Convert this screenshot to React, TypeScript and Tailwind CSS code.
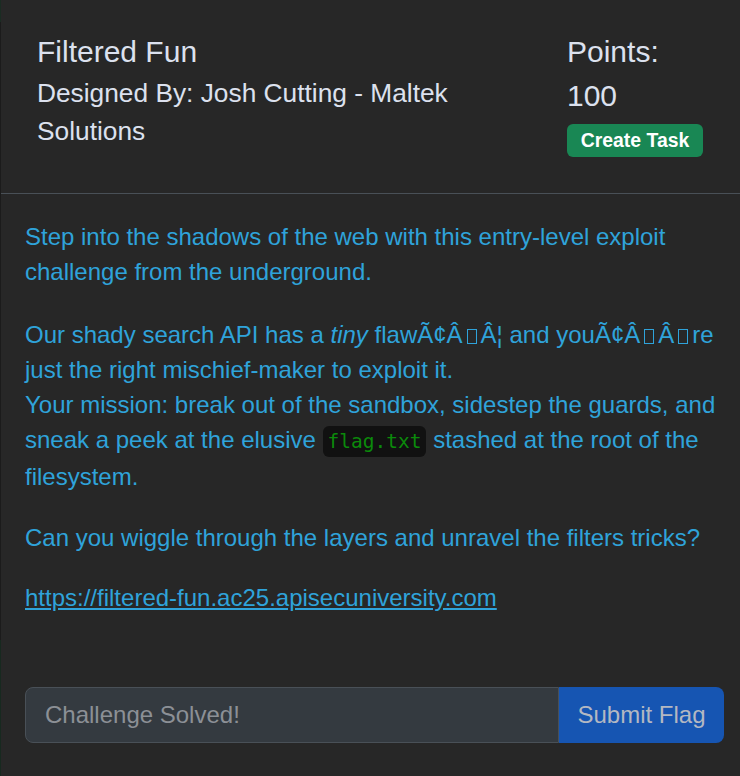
import React from "react";

function Tofu() {
  return (
    <span className="inline-block w-[10px] h-[15px] border border-current mx-[4px] align-[-1px]" />
  );
}

export default function App() {
  return (
    <div
      className="w-[740px] h-[776px] bg-[#272727] flex overflow-hidden"
      style={{ fontFamily: '"Liberation Sans", Arial, sans-serif' }}
    >
      <div className="w-px flex flex-col shrink-0">
        <div className="h-[22px] bg-[#1a2c22]" />
        <div className="flex-1 bg-[#1b1b1b]" />
        <div className="h-[136px] bg-[#17291f]" />
      </div>
      <div className="flex-1 flex flex-col">
        <div className="flex pl-[36px] pr-[37px] pt-[34px] pb-[36px] border-b border-[#495057] text-[#dce1ee]">
          <div className="w-[480px]">
            <div className="text-[30px] leading-[36px]">Filtered Fun</div>
            <div className="text-[26.3px] leading-[38px] mt-[4px]">
              Designed By: Josh Cutting - Maltek Solutions
            </div>
          </div>
          <div className="ml-auto w-[136px] flex flex-col items-start">
            <div className="text-[30px] leading-[36px]">Points:</div>
            <div className="text-[30px] leading-[36px] mt-[8px]">100</div>
            <div className="mt-[10px] h-[33px] w-[136px] rounded-[6px] bg-[#198754] text-white font-bold text-[19.4px] flex items-center justify-center">
              Create Task
            </div>
          </div>
        </div>
        <div className="pl-[24px] pr-[15px] pt-[25px] text-[24px] leading-[35px] text-[#2fa3da]">
          <p className="mb-[28px]">
            Step into the shadows of the web with this entry-level exploit challenge from the underground.
          </p>
          <p className="mb-[26px]">
            Our shady search API has a <em>tiny</em> flawÃ¢Â<Tofu />Â¦ and youÃ¢Â<Tofu />Â<Tofu />re just the right mischief-maker to exploit it.
            <br />
            Your mission: break out of the sandbox, sidestep the guards, and sneak a peek at the elusive{" "}
            <code
              className="bg-[#111111] text-[#0b8a0b] rounded-[6px] px-[5px] py-[4px] text-[19.5px]"
              style={{ fontFamily: '"DejaVu Sans Mono", "Liberation Mono", monospace' }}
            >
              flag.txt
            </code>{" "}
            stashed at the root of the filesystem.
          </p>
          <p className="mb-[25px]">
            Can you wiggle through the layers and unravel the filters tricks?
          </p>
          <p>
            <a className="underline text-[#2fa3da]" href="#">
              https://filtered-fun.ac25.apisecuniversity.com
            </a>
          </p>
        </div>
        <div className="mt-[72px] pl-[24px] pr-[16px] flex">
          <div className="flex-1 h-[56px] bg-[#343a40] border border-[#495057] rounded-l-[8px] flex items-center pl-[19px] text-[24px] text-[#8c9096]">
            Challenge Solved!
          </div>
          <div className="w-[165px] h-[56px] bg-[#1655b2] rounded-r-[8px] flex items-center justify-center text-[24px] text-[#b3b8c2]">
            Submit Flag
          </div>
        </div>
      </div>
    </div>
  );
}
